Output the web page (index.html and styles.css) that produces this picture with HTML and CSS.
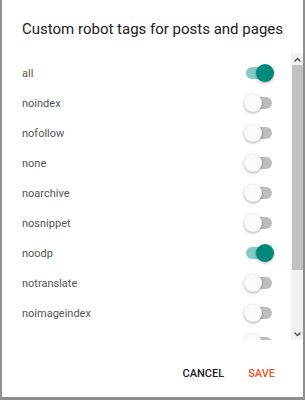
FILE: index.html
```html
<!DOCTYPE html>
<html>
	<head>
		<meta name="viewport" content="width=device-width, initial-scale=1" />
		<title>Custom robot tags</title>
		<link rel="stylesheet" href="styles.css">
	</head>
	<body>
		<div class="dialog">
			<h2 class="dialogTitle">Custom robot tags for posts and pages</h2>
			<div class="listArea">
				<div class="tagList">
					<div class="tagRow"><span>all</span><span class="switch on"></span></div>
					<div class="tagRow"><span>noindex</span><span class="switch"></span></div>
					<div class="tagRow"><span>nofollow</span><span class="switch"></span></div>
					<div class="tagRow"><span>none</span><span class="switch"></span></div>
					<div class="tagRow"><span>noarchive</span><span class="switch"></span></div>
					<div class="tagRow"><span>nosnippet</span><span class="switch"></span></div>
					<div class="tagRow"><span>noodp</span><span class="switch on"></span></div>
					<div class="tagRow"><span>notranslate</span><span class="switch"></span></div>
					<div class="tagRow"><span>noimageindex</span><span class="switch"></span></div>
					<div class="tagRow"><span></span><span class="switch"></span></div>
				</div>
				<div class="scrollbar">
					<div class="scrollButton">
						<svg width="7" height="5" viewBox="0 0 7 5"><path d="M0.5 4.5 L3.5 1.5 L6.5 4.5" fill="none" stroke="#505050" stroke-width="1.3"/></svg>
					</div>
					<div class="scrollThumb"></div>
					<div class="scrollTrack"></div>
					<div class="scrollButton">
						<svg width="7" height="5" viewBox="0 0 7 5"><path d="M0.5 0.5 L3.5 3.5 L6.5 0.5" fill="none" stroke="#505050" stroke-width="1.3"/></svg>
					</div>
				</div>
			</div>
			<div class="dialogActions">
				<button class="actionButton">Cancel</button>
				<button class="actionButton save">Save</button>
			</div>
		</div>
	</body>
</html>
```

FILE: styles.css
```css
html {
	font-family: Roboto, "Noto Sans", Arial, sans-serif;
}
body {
	margin: 0;
	background: #8f8f8f;
	height: 400px;
	overflow: hidden;
}
.dialog {
	margin: 0 2px 0 2px;
	height: 397px;
	background: #ffffff;
	display: flex;
	flex-direction: column;
}
.dialogTitle {
	margin: 0;
	padding: 19px 0 0 20px;
	height: 53px;
	box-sizing: border-box;
	font-size: 15px;
	font-weight: 400;
	line-height: 20px;
	white-space: nowrap;
	color: #212121;
}
.listArea {
	display: flex;
	height: 287px;
}
.tagList {
	flex: 1;
	overflow: hidden;
	padding-top: 5px;
}
.tagRow {
	display: flex;
	align-items: center;
	justify-content: space-between;
	height: 30px;
	padding: 0 19px 0 20px;
	font-size: 11px;
	color: #555555;
}
.switch {
	position: relative;
	width: 26px;
	height: 12px;
	border-radius: 6px;
	background: #bdbdbd;
}
.switch::after {
	content: "";
	position: absolute;
	top: -3px;
	left: -2px;
	width: 18px;
	height: 18px;
	border-radius: 50%;
	background: #fafafa;
	box-shadow: 0 1px 3px rgba(0, 0, 0, 0.35);
}
.switch.on {
	background: #80cbc4;
}
.switch.on::after {
	left: 10px;
	background: #00897b;
}
.scrollbar {
	width: 12px;
	background: #f1f1f1;
	display: flex;
	flex-direction: column;
}
.scrollButton {
	height: 12px;
	display: flex;
	align-items: center;
	justify-content: center;
}
.scrollThumb {
	height: 205px;
	margin: 0 0 0 1px;
	background: #c1c1c1;
}
.scrollTrack {
	flex: 1;
}
.dialogActions {
	flex: 1;
	display: flex;
	justify-content: flex-end;
	align-items: center;
	gap: 24px;
	padding: 9px 28px 0 0;
}
.actionButton {
	font-family: Roboto, Arial, sans-serif;
	font-size: 11px;
	font-weight: 500;
	text-transform: uppercase;
	color: #212121;
	background: none;
	border: none;
	padding: 0;
	cursor: pointer;
}
.actionButton.save {
	color: #f4511e;
}
```
